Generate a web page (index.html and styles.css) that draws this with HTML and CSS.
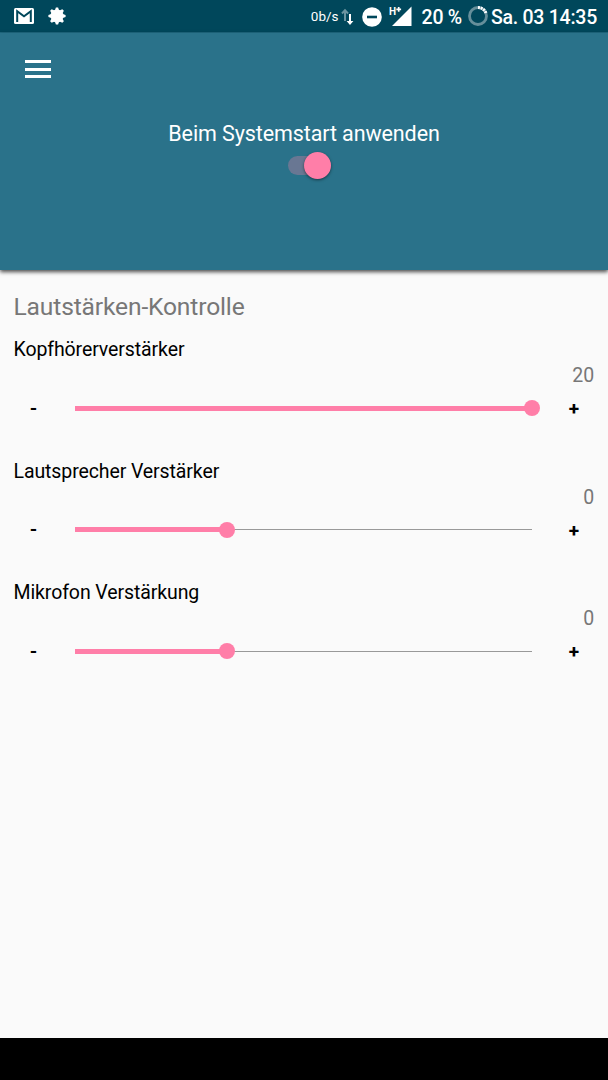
FILE: index.html
```
<!DOCTYPE html>
<html lang="de">
<head>
    <meta charset="UTF-8">
    <title>Lautstärken-Kontrolle</title>
    <link rel="stylesheet" href="styles.css">
</head>
<body>
    <div class="statusbar">
        <svg class="icon-mail" width="20" height="16" viewBox="0 0 20 16">
            <rect width="20" height="16" rx="1.500" fill="#fff"/>
            <path d="M3.200 14V3.200L10 8.200l6.800-5V14" fill="none" stroke="#00475b" stroke-width="2"/>
        </svg>
        <svg class="icon-gear" width="18" height="18" viewBox="-9 -9 18 18">
            <g fill="#fff">
                <circle r="6.500"/>
                <path id="tooth" d="M-1.100-8.600h2.200L2.300-5h-4.600zM-1.100 8.600h2.200L2.300 5h-4.600z"/>
                <use href="#tooth" transform="rotate(45)"/>
                <use href="#tooth" transform="rotate(90)"/>
                <use href="#tooth" transform="rotate(135)"/>
            </g>
        </svg>
        <span class="speed">0b/s</span>
        <svg class="icon-traffic" width="12" height="18" viewBox="0 0 12 18">
            <path d="M3 13V3M0 5.500L3 2.200l3 3.300" fill="none" stroke="#6b939f" stroke-width="2"/>
            <path d="M7 6v7H4.600L8 17l3.400-4H9V6z" fill="#fff"/>
        </svg>
        <svg class="icon-dnd" width="20" height="20" viewBox="0 0 20 20">
            <circle cx="10" cy="10" r="9.800" fill="#fff"/>
            <path d="M5 10h10" stroke="#00475b" stroke-width="2.600"/>
        </svg>
        <svg class="icon-signal" width="24" height="22" viewBox="0 0 24 22">
            <path d="M3 21L22.500 1.500V21z" fill="#fff"/>
            <path d="M0 0h12.500v6.500L8 11H0z" fill="#00475b"/>
            <text x="0" y="9.500" class="network">H</text>
            <path d="M7.300 4.300h4.800M9.700 1.900v4.800" stroke="#fff" stroke-width="1.700"/>
        </svg>
        <span class="percent">20 %</span>
        <svg class="icon-battery" width="20" height="20" viewBox="0 0 20 20">
            <circle cx="10" cy="10" r="8.500" fill="none" stroke="#668f9b" stroke-width="2.800"/>
            <path d="M10 1.500A8.500 8.500 0 0 1 18.100 7.400" fill="none" stroke="#fff" stroke-width="3" stroke-dasharray="2 0.700"/>
        </svg>
        <span class="clock">Sa. 03 14:35</span>
    </div>
    <div class="header">
        <button class="btn-menu" aria-label="Menü">
            <span></span>
            <span></span>
            <span></span>
        </button>
        <div class="boot">
            <span class="boot-label">Beim Systemstart anwenden</span>
            <div class="switch">
                <div class="switch-thumb"></div>
            </div>
        </div>
    </div>
    <div class="content">
        <h3>Lautstärken-Kontrolle</h3>
        <div class="control">
            <div class="name">Kopfhörerverstärker</div>
            <div class="value">20</div>
            <div class="row">
                <button class="btn-step minus">-</button>
                <div class="slider">
                    <div class="fill" style="width: 100%"></div>
                </div>
                <button class="btn-step plus">+</button>
            </div>
        </div>
        <div class="control">
            <div class="name">Lautsprecher Verstärker</div>
            <div class="value">0</div>
            <div class="row">
                <button class="btn-step minus">-</button>
                <div class="slider">
                    <div class="fill" style="width: 33.333%"></div>
                </div>
                <button class="btn-step plus">+</button>
            </div>
        </div>
        <div class="control">
            <div class="name">Mikrofon Verstärkung</div>
            <div class="value">0</div>
            <div class="row">
                <button class="btn-step minus">-</button>
                <div class="slider">
                    <div class="fill" style="width: 33.333%"></div>
                </div>
                <button class="btn-step plus">+</button>
            </div>
        </div>
    </div>
    <div class="navbar"></div>
</body>
</html>
```
FILE: styles.css
```
* {
    box-sizing: border-box;
}
body {
    margin: 0;
    height: 1080px;
    display: flex;
    flex-direction: column;
    overflow: hidden;
    background: #fafafa;
    font-family: Roboto, sans-serif;
}
button {
    border: none;
    padding: 0;
    background: none;
    font-family: inherit;
}
.statusbar {
    height: 33px;
    display: flex;
    align-items: center;
    padding: 0 11px 0 14px;
    border-bottom: 1px solid #1f6980;
    background: #00475b;
    color: #fff;
    white-space: nowrap;
}
.statusbar svg {
    flex: none;
}
.icon-gear {
    margin-left: 14px;
}
.speed {
    margin-left: auto;
    font-size: 13.500px;
}
.icon-traffic {
    margin-left: 3px;
    margin-top: 1px;
    overflow: visible;
}
.icon-dnd {
    margin-left: 8px;
    margin-top: 1px;
}
.icon-signal {
    margin-left: 7px;
}
.network {
    fill: #fff;
    font-size: 10px;
    font-weight: 700;
}
.percent {
    margin: 2px 0 0 9px;
    font-size: 19.500px;
    font-weight: 500;
    letter-spacing: -0.250px;
}
.icon-battery {
    margin-left: 6px;
}
.clock {
    margin: 2px 0 0 3px;
    font-size: 19.500px;
    font-weight: 500;
    letter-spacing: -0.250px;
}
.header {
    position: relative;
    height: 237px;
    padding: 27px 0 0 25px;
    background: #2a728a;
    box-shadow: 0 2px 4px rgba(0, 0, 0, 0.7);
}
.btn-menu {
    width: 26px;
    display: flex;
    flex-direction: column;
    row-gap: 4.500px;
}
.btn-menu span {
    width: 100%;
    height: 3px;
    background: #fff;
}
.boot {
    margin: 43px 0 0 -25px;
    display: flex;
    flex-direction: column;
    align-items: center;
}
.boot-label {
    color: #fff;
    font-size: 21.500px;
    line-height: 26px;
    letter-spacing: -0.100px;
}
.switch {
    width: 43px;
    height: 19px;
    margin: 9px 0 0 11px;
    display: flex;
    align-items: center;
    justify-content: flex-end;
    border-radius: 10px;
    background: #697793;
}
.switch-thumb {
    flex: none;
    width: 27px;
    height: 27px;
    border-radius: 50%;
    background: #ff7ea8;
    box-shadow: 0 1px 3px rgba(0, 0, 0, 0.5);
}
.content {
    flex: 1;
    padding: 22px 14px 0 13.500px;
}
h3 {
    margin: 0 0 13px;
    color: #777;
    font-size: 24.600px;
    font-weight: 400;
    line-height: 30px;
    letter-spacing: -0.150px;
}
.control {
    height: 121.500px;
}
.name {
    color: #000;
    font-size: 19.500px;
    line-height: 30px;
    letter-spacing: -0.100px;
}
.value {
    color: #777;
    font-size: 19.500px;
    line-height: 22px;
    text-align: right;
    letter-spacing: -0.100px;
}
.row {
    height: 42px;
    display: flex;
    align-items: center;
}
.btn-step {
    width: 40px;
    color: #000;
    font-size: 19px;
    font-weight: 700;
    line-height: 24px;
}
.minus {
    padding-top: 1px;
}
.plus {
    padding-top: 2px;
}
.slider {
    width: 457px;
    height: 16px;
    margin: 0 22px 0 21.500px;
    display: flex;
    align-items: center;
    background: linear-gradient(#999, #999) center / 100% 1px no-repeat;
}
.fill {
    height: 5px;
    display: flex;
    align-items: center;
    justify-content: flex-end;
    background: #ff7ea8;
}
.fill::after {
    content: "";
    flex: none;
    width: 16px;
    height: 16px;
    margin-right: -8px;
    border-radius: 50%;
    background: #ff7ea8;
}
.navbar {
    height: 42px;
    background: #000;
}
```
